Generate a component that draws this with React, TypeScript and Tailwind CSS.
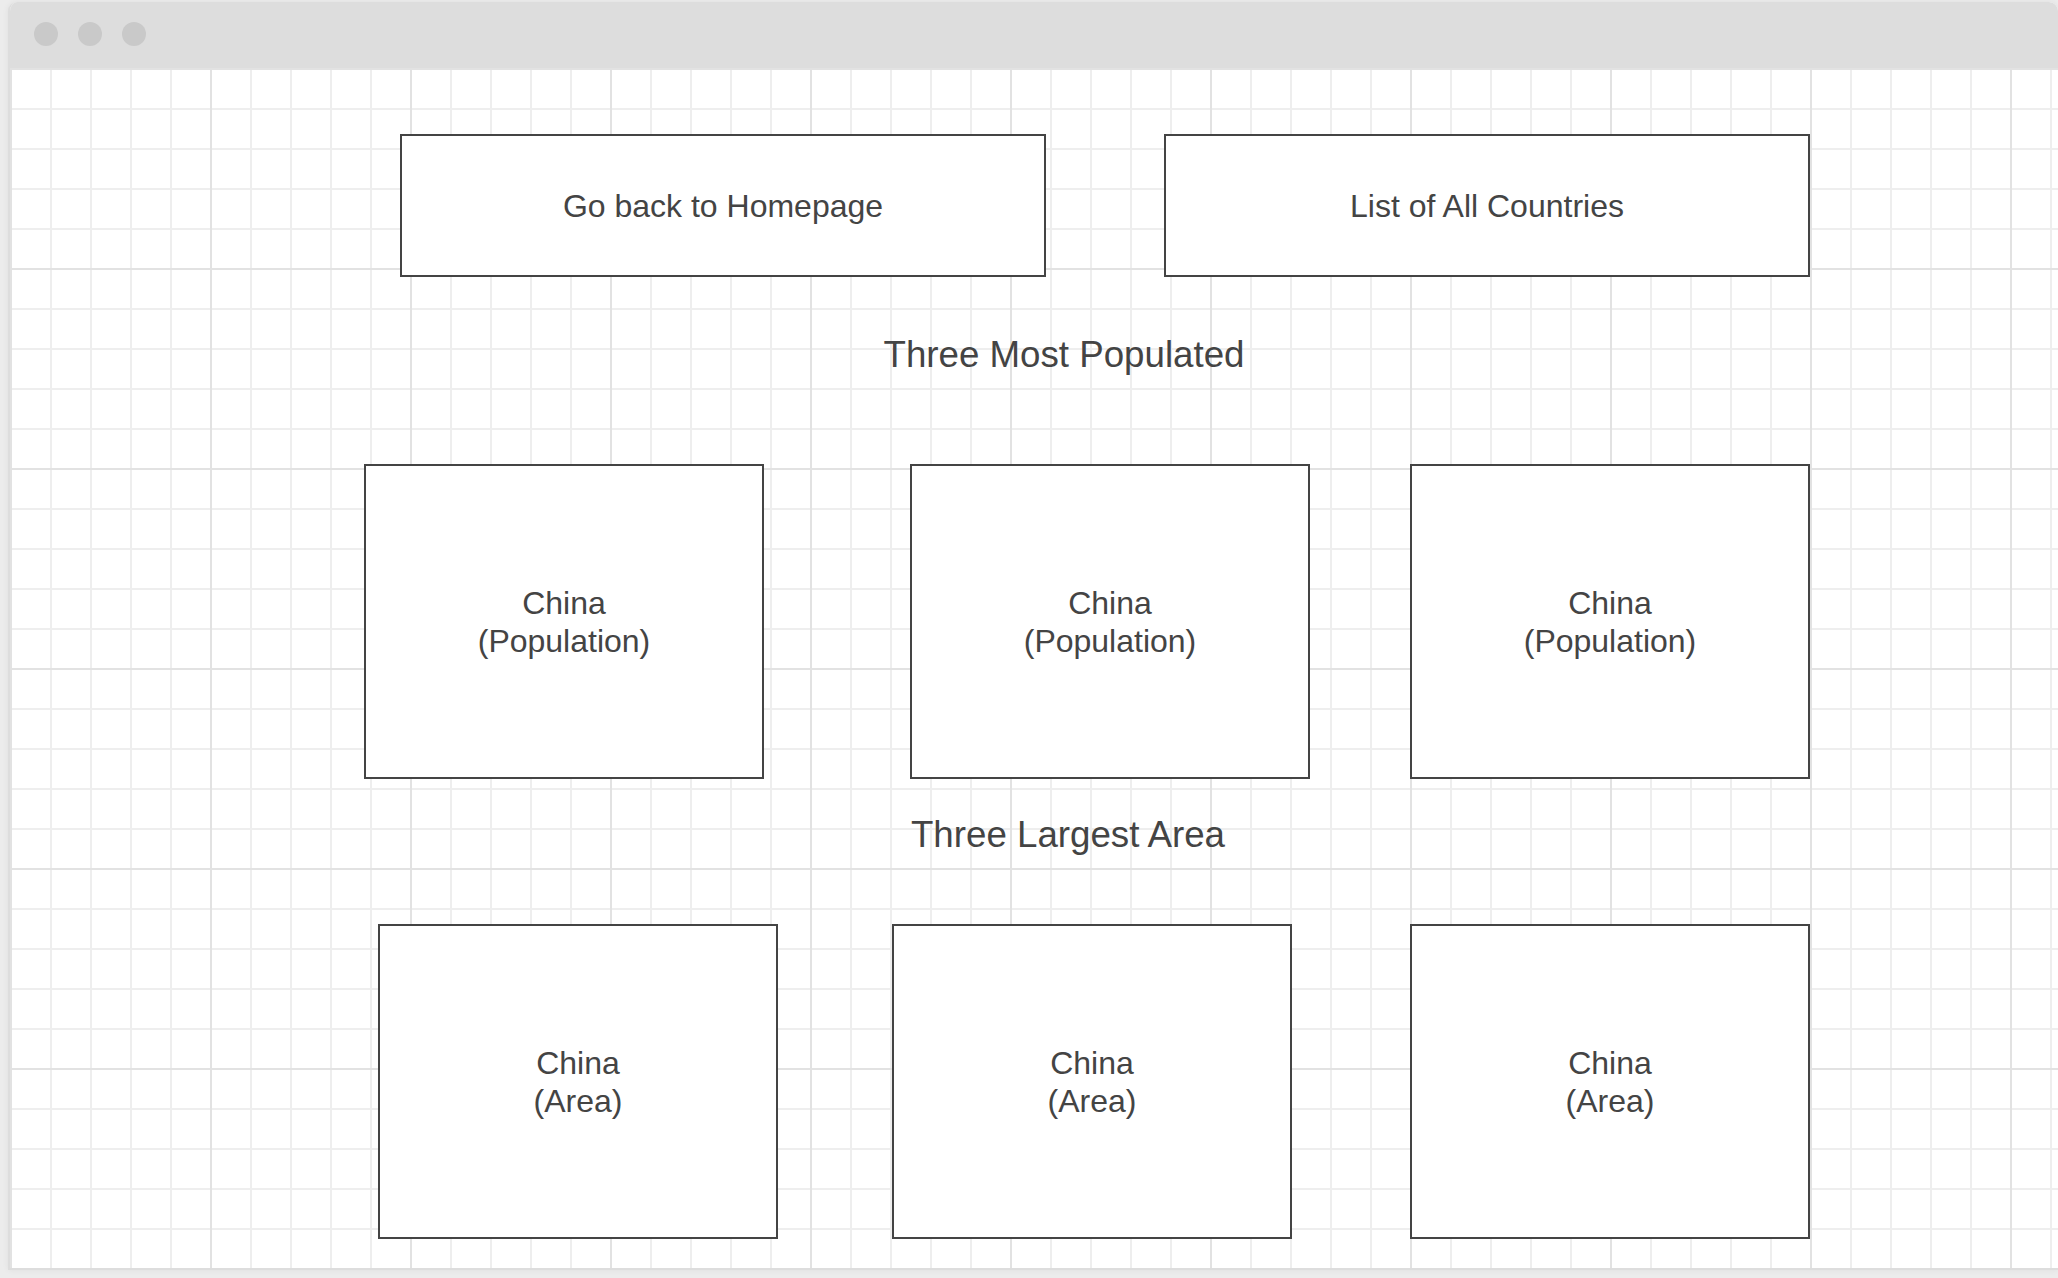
import React from 'react';

const POPULATED = ['China', 'China', 'China'];
const LARGEST = ['China', 'China', 'China'];

function CountryCard({ name, label }: { name: string; label: string }) {
    return (
        <div className="flex h-[315px] w-[400px] shrink-0 flex-col items-center justify-center border-2 border-[#444444] bg-white pt-[2px] text-[32px] leading-[37.7px] text-[#444444]">
            <span>{name}</span>
            <span>({label})</span>
        </div>
    );
}

function NavButton({ children }: { children: React.ReactNode }) {
    return (
        <button className="flex h-[143px] w-[646px] shrink-0 items-center justify-center border-2 border-[#444444] bg-white text-[32px] leading-[38px] text-[#444444]">
            {children}
        </button>
    );
}

export default function App() {
    return (
        <div className="h-[1278px] w-[2058px] overflow-hidden bg-[#ececec] pt-[2px] font-['Liberation_Sans',Arial,sans-serif]">
            <div className="ml-2 flex h-[1268px] w-[2050px] flex-col overflow-hidden rounded-t-[9px] border-b-2 border-l-2 border-[#dddddd] bg-white shadow-[0_0_6px_rgba(0,0,0,0.06)]">
                {/* window title bar */}
                <div className="flex h-[66px] shrink-0 items-center gap-5 bg-[#dddddd] pb-[2px] pl-6">
                    <span className="h-6 w-6 rounded-full bg-[#c9c9c9]" />
                    <span className="h-6 w-6 rounded-full bg-[#c9c9c9]" />
                    <span className="h-6 w-6 rounded-full bg-[#c9c9c9]" />
                </div>

                {/* canvas with grid */}
                <div className="flex flex-1 flex-col bg-white [background-image:linear-gradient(to_right,#e2e2e2_2px,transparent_2px),linear-gradient(to_bottom,#e2e2e2_2px,transparent_2px),linear-gradient(to_right,#eeeeee_2px,transparent_2px),linear-gradient(to_bottom,#eeeeee_2px,transparent_2px)] [background-size:200px_200px,200px_200px,40px_40px,40px_40px]">
                    <div className="flex gap-[118px] pl-[390px] pt-[66px]">
                        <NavButton>Go back to Homepage</NavButton>
                        <NavButton>List of All Countries</NavButton>
                    </div>

                    <h2 className="mt-[56px] pl-[60px] text-center text-[36.7px] leading-[44px] text-[#444444]">
                        Three Most Populated
                    </h2>

                    <div className="mt-[87px] flex pl-[354px]">
                        {POPULATED.map((name, idx) => (
                            <div key={idx} className={idx === 0 ? '' : idx === 1 ? 'ml-[146px]' : 'ml-[100px]'}>
                                <CountryCard name={name} label="Population" />
                            </div>
                        ))}
                    </div>

                    <h2 className="mt-[34px] pl-[68px] text-center text-[36.7px] leading-[44px] text-[#444444]">
                        Three Largest Area
                    </h2>

                    <div className="mt-[67px] flex pl-[368px]">
                        {LARGEST.map((name, idx) => (
                            <div key={idx} className={idx === 0 ? '' : idx === 1 ? 'ml-[114px]' : 'ml-[118px]'}>
                                <CountryCard name={name} label="Area" />
                            </div>
                        ))}
                    </div>
                </div>
            </div>
        </div>
    );
}
